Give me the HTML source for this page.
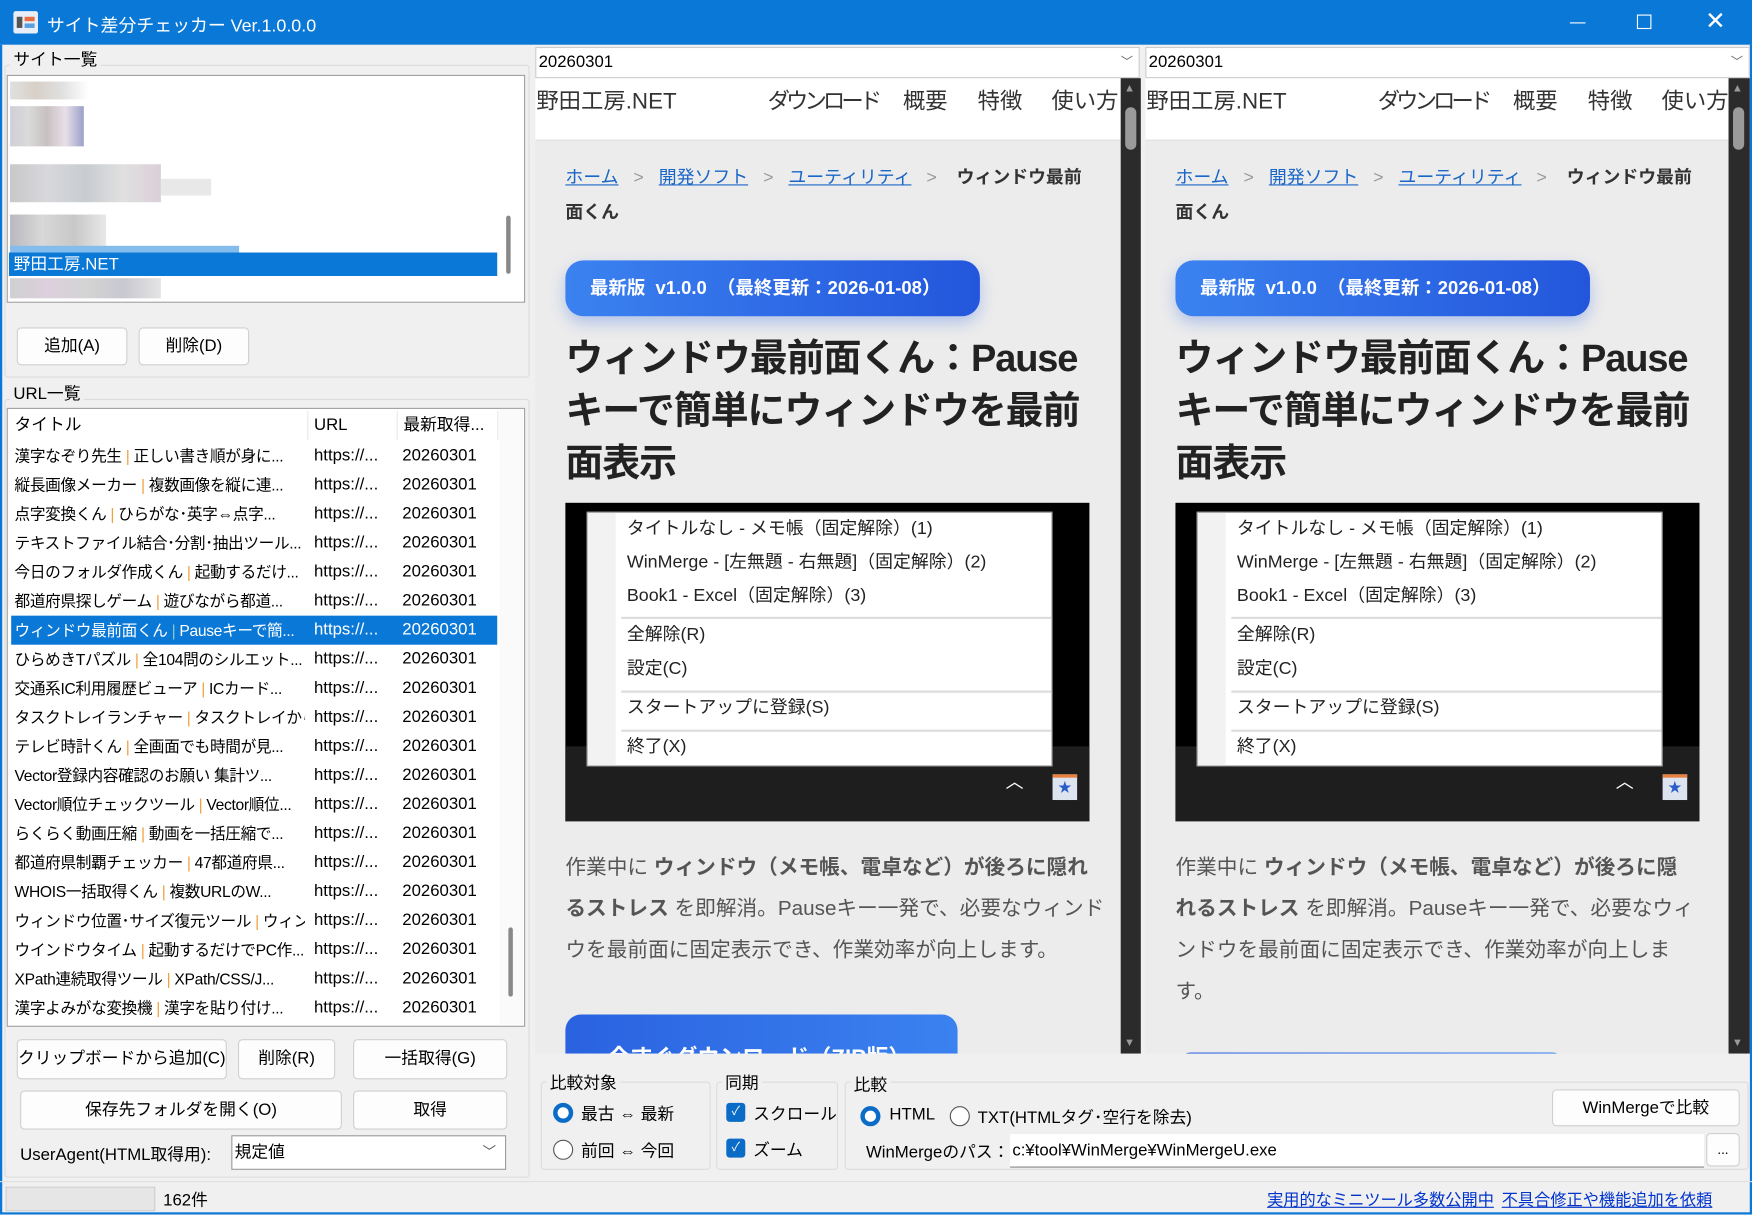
<!DOCTYPE html>
<html><head><meta charset="utf-8"><style>
html,body{margin:0;padding:0;width:1752px;height:1214px;overflow:hidden;background:#f0f0f0}
#w{position:absolute;left:0;top:0;width:1568px;height:1087px;transform:scale(1.11735);transform-origin:0 0;font-family:"Liberation Sans","Noto Sans CJK JP",sans-serif;font-size:15px;color:#000;background:#f0f0f0;overflow:hidden}
.a{position:absolute;white-space:nowrap}
.btn{position:absolute;background:#fdfdfd;border:1px solid #d0d0d0;border-radius:4px;text-align:center;box-sizing:border-box;font-size:15px}
.grp{position:absolute;border:1px solid #dcdcdc;border-radius:3px}
.lbl{position:absolute;background:#f0f0f0;padding:0 3px;font-size:15px}
.pane{position:absolute;top:70px;height:873px;background:#ececec;overflow:hidden}
.blur{position:absolute;height:14px}
.row{position:absolute;left:0;width:435px;height:26px;line-height:26px;font-size:14px}
.row span{position:absolute}
.sep{color:#f0a040}
.mi{position:absolute;left:35px;font-size:16px;color:#222;line-height:30px}
.ms{position:absolute;left:30px;width:385px;height:2px;background:#ddd}
</style></head><body><div id="w">
<div class="a" style="left:0;top:0;width:1568px;height:40px;background:#0a78d7"></div>
<div class="a" style="left:12px;top:10px;width:22px;height:20px;background:#e8eef8;border-radius:2px"><div class="a" style="left:3px;top:5px;width:5px;height:10px;background:#555"></div><div class="a" style="left:10px;top:5px;width:9px;height:4px;background:#e87040"></div><div class="a" style="left:10px;top:11px;width:9px;height:4px;background:#5aa0e0"></div></div>
<div class="a" style="left:42px;top:9px;color:#fff;font-size:16px">サイト差分チェッカー Ver.1.0.0.0</div>
<div class="a" style="left:1405px;top:20px;width:14px;height:1px;background:#fff"></div>
<div class="a" style="left:1465px;top:13px;width:11px;height:11px;border:1.5px solid #fff"></div>
<div class="a" style="left:1526px;top:6px;color:#fff;font-size:22px;font-weight:300">✕</div>
<div class="a" style="left:0;top:40px;width:2px;height:1047px;background:#0a78d7"></div>
<div class="a" style="left:1566px;top:40px;width:2px;height:1047px;background:#0a78d7"></div>
<div class="a" style="left:0;top:1085px;width:1568px;height:2px;background:#0a78d7"></div>

<div class="grp" style="left:4px;top:58px;width:468px;height:278px"></div>
<div class="lbl" style="left:9px;top:42px">サイト一覧</div>
<div class="a" style="left:6px;top:67px;width:462px;height:202px;background:#fff;border:1px solid #a0a0a0"></div>
<div class="blur" style="left:9px;top:73px;width:70px;height:16px;background:linear-gradient(90deg,#e0e0e0,#d8d0c8,#e0e0e0,#fff)"></div>
<div class="blur" style="left:9px;top:95px;width:66px;height:36px;background:linear-gradient(90deg,#cfcfd8,#dadada,#c8c0c0,#e8e0e8,#9aa0c8)"></div>
<div class="blur" style="left:9px;top:147px;width:135px;height:34px;background:linear-gradient(90deg,#c8c8c8,#d8d8dc,#c8ccd0,#e0e0e0,#dad0d8)"></div>
<div class="blur" style="left:144px;top:160px;width:45px;height:15px;background:#e8e8e8"></div>
<div class="blur" style="left:9px;top:192px;width:86px;height:30px;background:linear-gradient(90deg,#b8b8c0,#d8d8d8,#c8c8c8,#e8e8e8)"></div>
<div class="blur" style="left:9px;top:220px;width:205px;height:6px;background:#84bcec"></div>
<div class="a" style="left:8px;top:226px;width:437px;height:21px;background:#0a78d7;color:#fff;line-height:21px;font-size:15px">&nbsp;野田工房.NET</div>
<div class="blur" style="left:9px;top:249px;width:135px;height:18px;background:linear-gradient(90deg,#d0d0d0,#dcd0dc,#d4d4d4,#c8c8d0,#e4e4e4)"></div>
<div class="a" style="left:453px;top:193px;width:4px;height:52px;background:#888;border-radius:2px"></div>
<div class="btn" style="left:15px;top:293px;width:99px;height:34px;line-height:32px">追加(A)</div>
<div class="btn" style="left:124px;top:293px;width:99px;height:34px;line-height:32px">削除(D)</div>

<div class="grp" style="left:4px;top:357px;width:468px;height:695px"></div>
<div class="lbl" style="left:9px;top:341px">URL一覧</div>
<div class="a" style="left:6px;top:365px;width:462px;height:552px;background:#fff;border:1px solid #a0a0a0"></div>
<div class="a" style="left:7px;top:366px;width:440px;height:550px;overflow:hidden">
 <div class="row" style="top:2px;font-size:15px"><span style="left:6px">タイトル</span><span style="left:274px">URL</span><span style="left:354px">最新取得...</span></div>
 <div class="a" style="left:268px;top:2px;width:1px;height:26px;background:#e8e8e8"></div>
 <div class="a" style="left:348px;top:2px;width:1px;height:26px;background:#e8e8e8"></div>
 <div class="a" style="left:438px;top:2px;width:1px;height:26px;background:#e8e8e8"></div>
</div>
<div class="a" style="left:447px;top:366px;width:21px;height:551px;background:#fafafa"></div>
<div class="a" style="left:455px;top:830px;width:4px;height:62px;background:#888;border-radius:2px"></div>
<div id="rows" class="a" style="left:7px;top:395px;width:440px;height:521px;overflow:hidden"></div>

<div class="btn" style="left:15px;top:930px;width:188px;height:36px;line-height:34px">クリップボードから追加(C)</div>
<div class="btn" style="left:213px;top:930px;width:87px;height:36px;line-height:34px">削除(R)</div>
<div class="btn" style="left:316px;top:930px;width:138px;height:36px;line-height:34px">一括取得(G)</div>
<div class="btn" style="left:18px;top:976px;width:288px;height:35px;line-height:33px">保存先フォルダを開く(O)</div>
<div class="btn" style="left:316px;top:976px;width:138px;height:35px;line-height:33px">取得</div>
<div class="a" style="left:18px;top:1022px">UserAgent(HTML取得用):</div>
<div class="a" style="left:207px;top:1016px;width:246px;height:31px;background:#fff;border:1px solid #9a9a9a;box-sizing:border-box;line-height:29px;padding-left:2px">規定値<span style="position:absolute;right:8px;color:#555;font-size:12px">﹀</span></div>

<div class="a" style="left:0;top:1057px;width:1568px;height:1px;background:#e0e0e0"></div>
<div class="a" style="left:5px;top:1062px;width:132px;height:20px;background:#e6e6e6;border:1px solid #cfcfcf"></div>
<div class="a" style="left:146px;top:1063px">162件</div>
<div class="a" style="left:1134px;top:1063px;color:#0033cc;text-decoration:underline;font-size:14.5px">実用的なミニツール多数公開中</div>
<div class="a" style="left:1344px;top:1063px;color:#0033cc;text-decoration:underline;font-size:14.5px">不具合修正や機能追加を依頼</div>

<div class="a" style="left:479px;top:42px;width:541px;height:28px;background:#fff;border:1px solid #ccc;box-sizing:border-box;line-height:26px;padding-left:2px">20260301<span style="position:absolute;right:5px;color:#666;font-size:11px">﹀</span></div>
<div class="a" style="left:1025px;top:42px;width:541px;height:28px;background:#fff;border:1px solid #ccc;box-sizing:border-box;line-height:26px;padding-left:2px">20260301<span style="position:absolute;right:5px;color:#666;font-size:11px">﹀</span></div>

<div id="p1" class="pane" style="left:479px;width:524px"></div>
<div id="p2" class="pane" style="left:1025px;width:522px"></div>
<div class="a" style="left:1003px;top:70px;width:18px;height:873px;background:#2b2b2b"><div class="a" style="left:4px;top:26px;width:10px;height:38px;background:#9a9a9a;border-radius:5px"></div><div class="a" style="left:3px;top:4px;color:#999;font-size:10px">▲</div><div class="a" style="left:3px;top:858px;color:#999;font-size:10px">▼</div></div>
<div class="a" style="left:1547px;top:70px;width:19px;height:873px;background:#2b2b2b"><div class="a" style="left:4px;top:26px;width:10px;height:38px;background:#9a9a9a;border-radius:5px"></div><div class="a" style="left:3px;top:4px;color:#999;font-size:10px">▲</div><div class="a" style="left:3px;top:858px;color:#999;font-size:10px">▼</div></div>

<div class="a" style="left:479px;top:943px;width:1087px;height:114px;background:#f0f0f0"></div>
<div class="grp" style="left:484px;top:968px;width:150px;height:77px"></div>
<div class="lbl" style="left:489px;top:958px">比較対象</div>
<div class="a" style="left:495px;top:987px;width:10px;height:10px;border:4px solid #0a6cc6;border-radius:50%;background:#fff"></div>
<div class="a" style="left:520px;top:986px">最古 ⇔ 最新</div>
<div class="a" style="left:495px;top:1020px;width:16px;height:16px;border:1px solid #555;border-radius:50%;background:#fff"></div>
<div class="a" style="left:520px;top:1019px">前回 ⇔ 今回</div>
<div class="grp" style="left:641px;top:968px;width:107px;height:77px"></div>
<div class="lbl" style="left:646px;top:958px">同期</div>
<div class="a" style="left:650px;top:987px;width:17px;height:17px;background:#0a6cc6;border-radius:3px;color:#fff;font-size:11px;text-align:center;line-height:17px">✓</div>
<div class="a" style="left:674px;top:986px">スクロール</div>
<div class="a" style="left:650px;top:1019px;width:17px;height:17px;background:#0a6cc6;border-radius:3px;color:#fff;font-size:11px;text-align:center;line-height:17px">✓</div>
<div class="a" style="left:674px;top:1018px">ズーム</div>
<div class="grp" style="left:756px;top:968px;width:807px;height:77px"></div>
<div class="lbl" style="left:761px;top:960px">比較</div>
<div class="a" style="left:770px;top:990px;width:10px;height:10px;border:4px solid #0a6cc6;border-radius:50%;background:#fff"></div>
<div class="a" style="left:796px;top:989px">HTML</div>
<div class="a" style="left:850px;top:990px;width:16px;height:16px;border:1px solid #555;border-radius:50%;background:#fff"></div>
<div class="a" style="left:875px;top:989px">TXT(HTMLタグ･空行を除去)</div>
<div class="btn" style="left:1389px;top:975px;width:168px;height:33px;line-height:31px">WinMergeで比較</div>
<div class="a" style="left:775px;top:1020px">WinMergeのパス：</div>
<div class="a" style="left:904px;top:1015px;width:619px;height:29px;background:#fff;border-bottom:1px solid #888;line-height:29px;padding-left:2px">c:¥tool¥WinMerge¥WinMergeU.exe</div>
<div class="btn" style="left:1527px;top:1014px;width:30px;height:30px;line-height:28px;font-size:12px">...</div>
</div>
<script>
var R=[["漢字なぞり先生","正しい書き順が身に..."],["縦長画像メーカー","複数画像を縦に連..."],["点字変換くん","ひらがな･英字⇔点字..."],["テキストファイル結合･分割･抽出ツール...",""],["今日のフォルダ作成くん","起動するだけ..."],["都道府県探しゲーム","遊びながら都道..."],["ウィンドウ最前面くん","Pauseキーで簡..."],["ひらめきTパズル","全104問のシルエット..."],["交通系IC利用履歴ビューア","ICカード..."],["タスクトレイランチャー","タスクトレイから..."],["テレビ時計くん","全画面でも時間が見..."],["Vector登録内容確認のお願い 集計ツ...",""],["Vector順位チェックツール","Vector順位..."],["らくらく動画圧縮","動画を一括圧縮で..."],["都道府県制覇チェッカー","47都道府県..."],["WHOIS一括取得くん","複数URLのW..."],["ウィンドウ位置･サイズ復元ツール","ウィン..."],["ウインドウタイム","起動するだけでPC作..."],["XPath連続取得ツール","XPath/CSS/J..."],["漢字よみがな変換機","漢字を貼り付け..."]];
var h="";R.forEach(function(r,i){var s=i==6;h+='<div class="row" style="top:'+(i*26)+'px;'+(s?'background:#0a78d7;color:#fff;left:3px;width:435px;':'')+'"><span style="left:'+(s?3:6)+'px;width:260px;overflow:hidden;letter-spacing:-0.3px">'+r[0]+(r[1]?' <span class="sep" style="position:static;'+(s?'color:#8cc':'')+'">|</span> '+r[1]:'')+'</span><span style="left:'+(s?271:274)+'px;font-size:15px">https://...</span><span style="left:'+(s?350:353)+'px;font-size:15px">20260301</span></div>';});
document.getElementById("rows").innerHTML=h;
function pane(para,btop){return '<div class="a" style="left:0;top:0;width:100%;height:55px;background:#fff;border-bottom:1px solid #ddd"></div>'+
'<div class="a" style="left:1px;top:4px;font-size:20px;color:#333">野田工房.NET</div>'+
'<div class="a" style="left:208px;top:4px;font-size:20px;color:#333;letter-spacing:-3.5px">ダウンロード</div>'+
'<div class="a" style="left:329px;top:4px;font-size:20px;color:#333">概要</div>'+
'<div class="a" style="left:396px;top:4px;font-size:20px;color:#333">特徴</div>'+
'<div class="a" style="left:462px;top:4px;font-size:20px;color:#333">使い方</div>'+
'<div class="a" style="left:27px;top:74px;font-size:16px;color:#333;line-height:31px"><span style="color:#1a66c8;text-decoration:underline">ホーム</span>&nbsp;&nbsp;&nbsp;<span style="color:#999">&gt;</span>&nbsp;&nbsp;&nbsp;<span style="color:#1a66c8;text-decoration:underline">開発ソフト</span>&nbsp;&nbsp;&nbsp;<span style="color:#999">&gt;</span>&nbsp;&nbsp;&nbsp;<span style="color:#1a66c8;text-decoration:underline">ユーティリティ</span>&nbsp;&nbsp;&nbsp;<span style="color:#999">&gt;</span>&nbsp;&nbsp;&nbsp;&nbsp;<b>ウィンドウ最前</b><br><b>面くん</b></div>'+
'<div class="a" style="left:27px;top:163px;width:371px;height:50px;border-radius:16px;background:linear-gradient(90deg,#3b82f0,#2356dc);box-shadow:0 6px 14px rgba(40,100,230,.3);color:#fff;font-weight:bold;font-size:16.5px;line-height:50px;padding-left:22px;box-sizing:border-box">最新版&nbsp; v1.0.0 &nbsp;（最終更新：2026-01-08）</div>'+
'<div class="a" style="left:27px;top:228px;font-size:34px;letter-spacing:-1px;font-weight:bold;color:#222;line-height:47px">ウィンドウ最前面くん：Pause<br>キーで簡単にウィンドウを最前<br>面表示</div>'+
'<div class="a" style="left:27px;top:380px;width:469px;height:285px;background:#000"><div class="a" style="left:0;top:218px;width:469px;height:67px;background:#1e1e1e"></div>'+
'<div class="a" style="left:19px;top:8px;width:415px;height:226px;background:#fff;border:1px solid #999;overflow:hidden"><div class="a" style="left:0;top:0;width:25px;height:226px;background:#f2f2f2"></div>'+
'<div class="mi" style="top:0">タイトルなし - メモ帳（固定解除）(1)<br>WinMerge - [左無題 - 右無題]（固定解除）(2)<br>Book1 - Excel（固定解除）(3)</div>'+
'<div class="ms" style="top:93px"></div>'+
'<div class="mi" style="top:95px">全解除(R)<br>設定(C)</div>'+
'<div class="ms" style="top:159px"></div>'+
'<div class="mi" style="top:160px">スタートアップに登録(S)</div>'+
'<div class="ms" style="top:194px"></div>'+
'<div class="mi" style="top:195px">終了(X)</div></div>'+
'<div class="a" style="left:394px;top:236px;color:#fff;font-size:16px">︿</div>'+
'<div class="a" style="left:436px;top:243px;width:22px;height:20px;background:#dde4f0;border-top:3px solid #e88040;color:#2a5cc8;font-size:12px;text-align:center;line-height:18px">★</div></div>'+
'<div class="a" style="left:27px;top:687px;font-size:18.5px;color:#555;line-height:37px">'+para+'</div>'+
'<div class="a" style="left:27px;top:'+btop+'px;width:351px;height:60px;border-radius:14px;background:linear-gradient(90deg,#2a62e0,#3b82f0);overflow:hidden"><div class="a" style="left:38px;top:22px;color:#fff;font-size:20px;font-weight:bold">今すぐダウンロード（ZIP版）</div></div>';}
document.getElementById("p1").innerHTML=pane('作業中に <b>ウィンドウ（メモ帳、電卓など）が後ろに隠れ</b><br><b>るストレス</b> を即解消。Pauseキー一発で、必要なウィンド<br>ウを最前面に固定表示でき、作業効率が向上します。',838);
document.getElementById("p2").innerHTML=pane('作業中に <b>ウィンドウ（メモ帳、電卓など）が後ろに隠</b><br><b>れるストレス</b> を即解消。Pauseキー一発で、必要なウィ<br>ンドウを最前面に固定表示でき、作業効率が向上しま<br>す。',872);
</script>
</body></html>
